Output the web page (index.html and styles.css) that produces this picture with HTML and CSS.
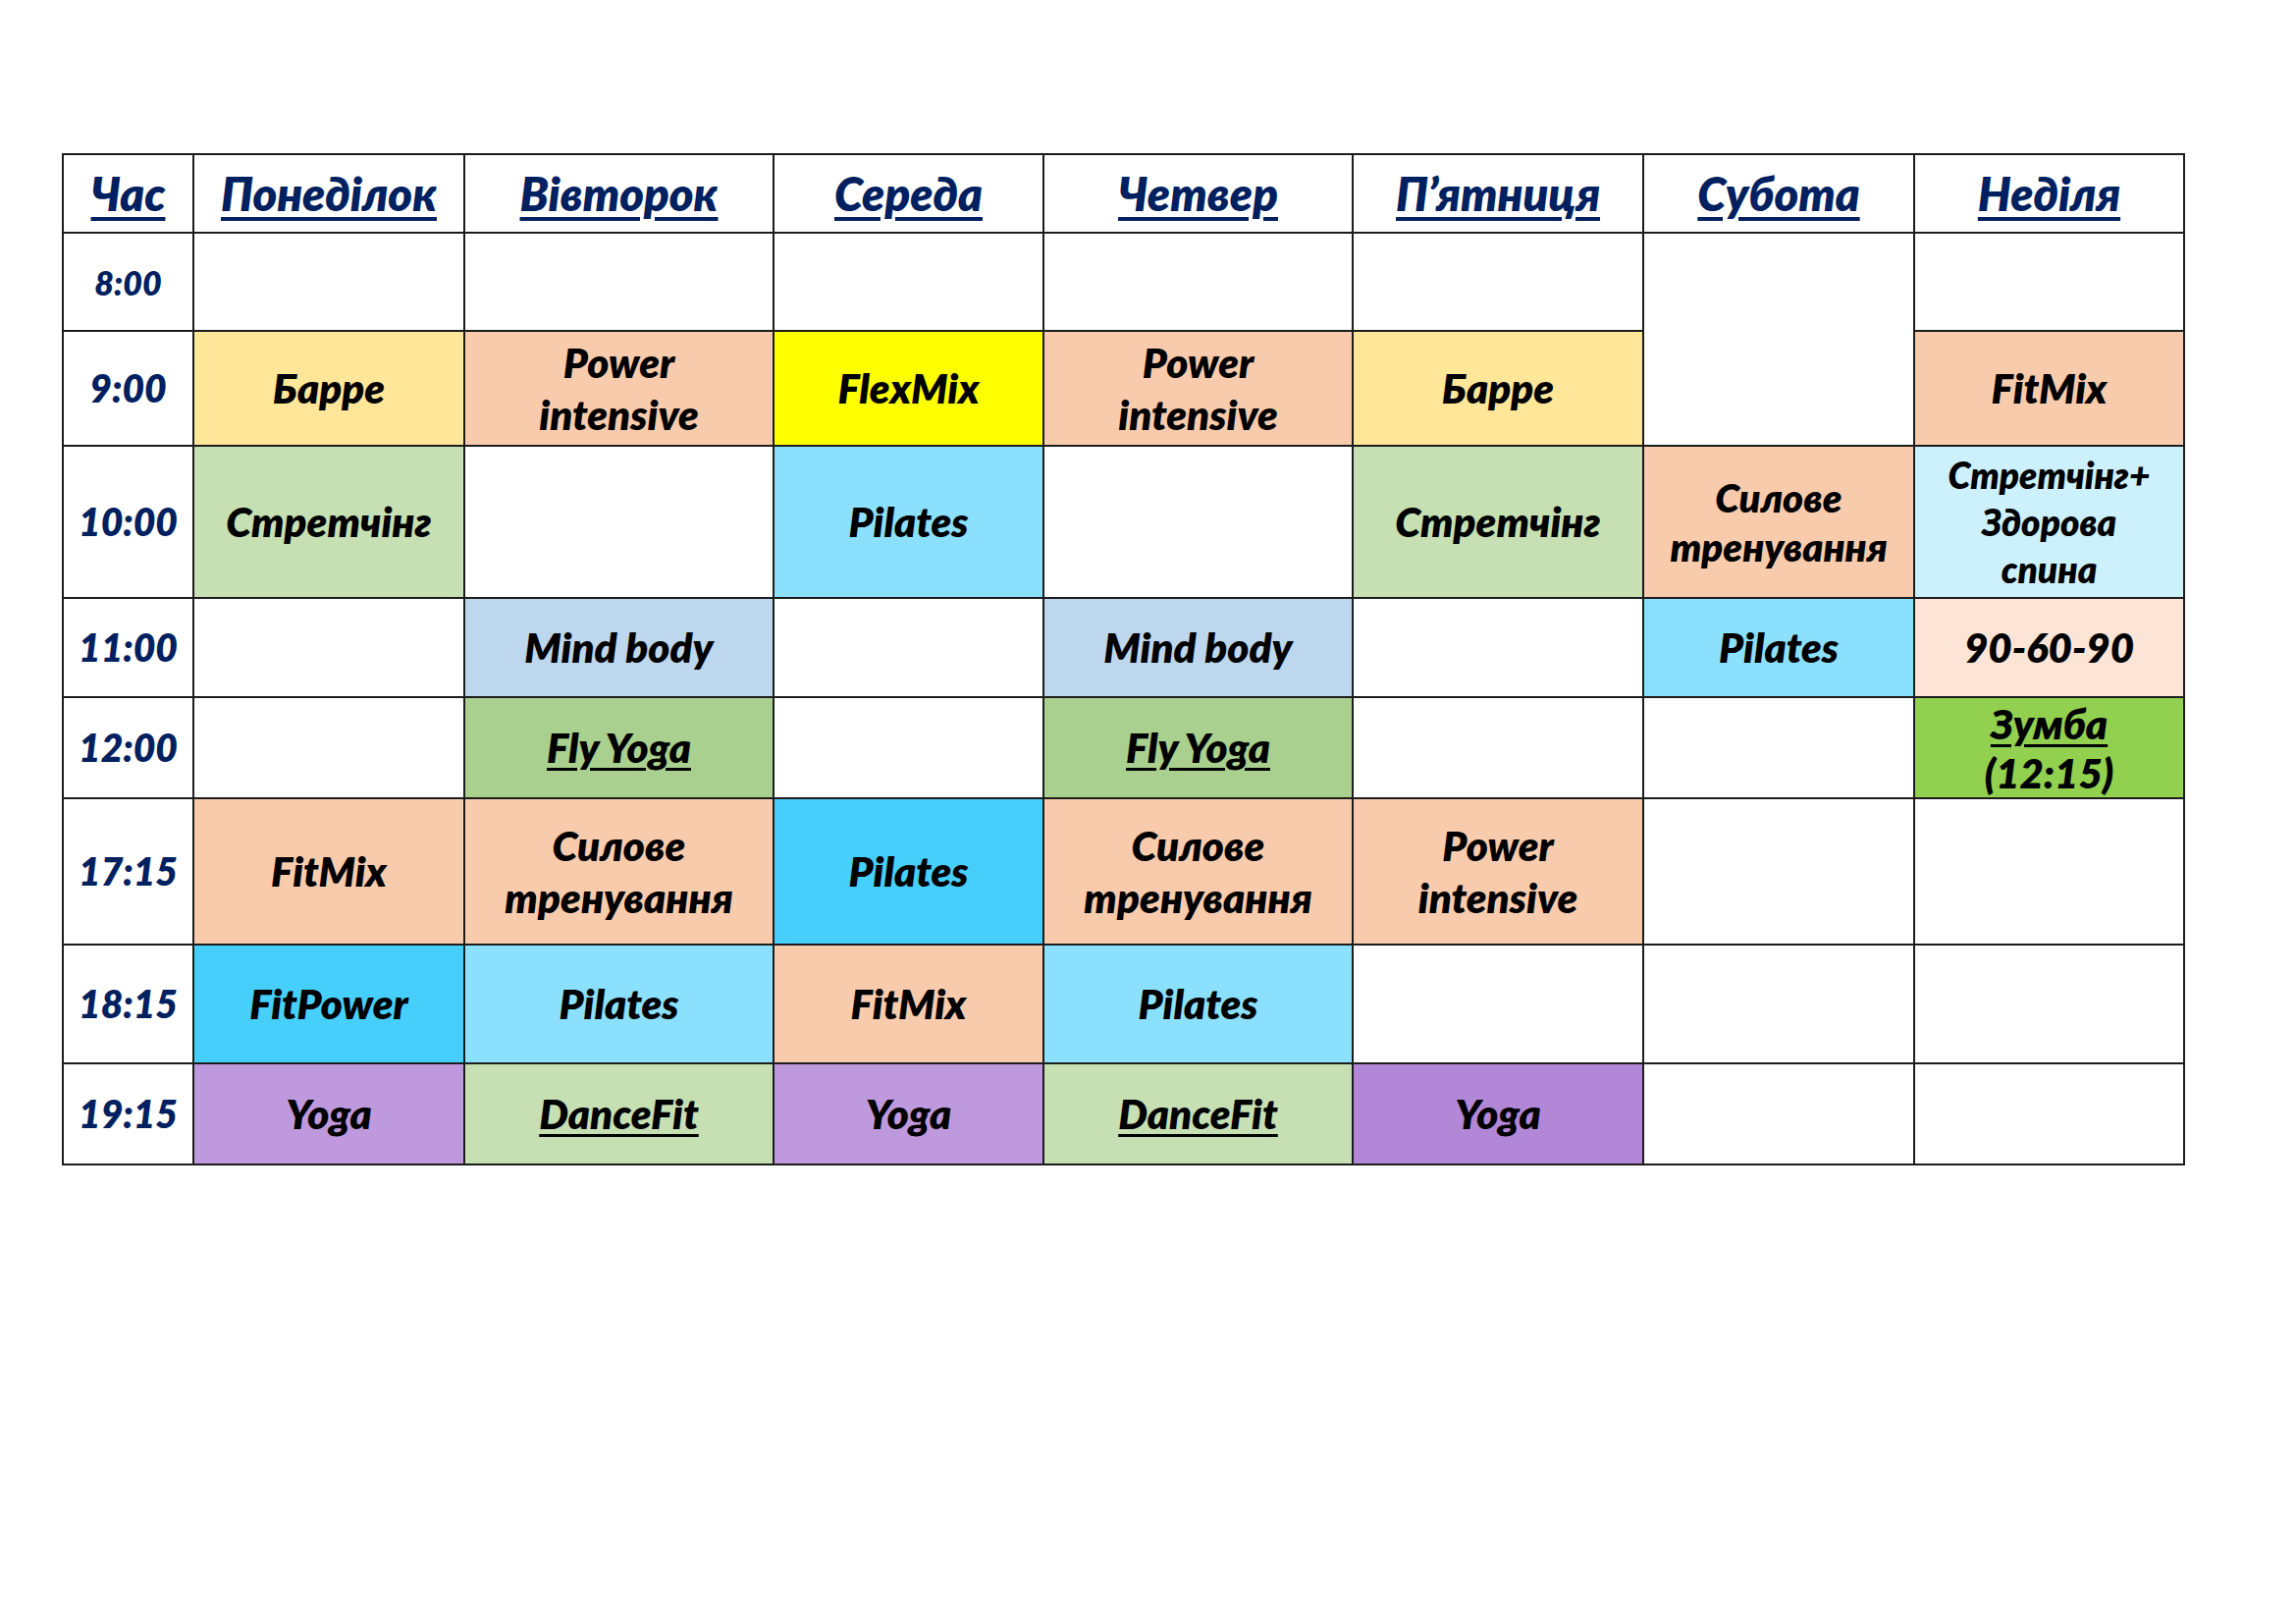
FILE: index.html
```html
<!DOCTYPE html>
<html lang="uk">
<head>
<meta charset="utf-8">
<title>Розклад</title>
<link rel="stylesheet" href="styles.css">
</head>
<body>
<div class="page">
<table class="schedule">
  <colgroup>
    <col class="w-time"><col class="w-mon"><col class="w-tue"><col class="w-wed"><col class="w-thu"><col class="w-fri"><col class="w-sat"><col class="w-sun">
  </colgroup>
  <thead>
    <tr class="r-head">
      <th><span class="u">Час</span></th>
      <th><span class="u">Понеділок</span></th>
      <th><span class="u">Вівторок</span></th>
      <th><span class="u">Середа</span></th>
      <th><span class="u">Четвер</span></th>
      <th><span class="u">П’ятниця</span></th>
      <th><span class="u">Субота</span></th>
      <th><span class="u">Неділя</span></th>
    </tr>
  </thead>
  <tbody>
    <tr class="r-800">
      <td class="time small">8:00</td>
      <td></td><td></td><td></td><td></td><td></td>
      <td rowspan="2"></td>
      <td></td>
    </tr>
    <tr class="r-900">
      <td class="time">9:00</td>
      <td class="bg-barre">Барре</td>
      <td class="bg-peach">Power<br>intensive</td>
      <td class="bg-yellow">FlexMix</td>
      <td class="bg-peach">Power<br>intensive</td>
      <td class="bg-barre">Барре</td>
      <td class="bg-peach">FitMix</td>
    </tr>
    <tr class="r-1000">
      <td class="time">10:00</td>
      <td class="bg-green">Стретчінг</td>
      <td></td>
      <td class="bg-cyan">Pilates</td>
      <td></td>
      <td class="bg-green">Стретчінг</td>
      <td class="bg-peach narrow">Силове<br>тренування</td>
      <td class="bg-ice small-text">Стретчінг+<br>Здорова<br>спина</td>
    </tr>
    <tr class="r-1100">
      <td class="time">11:00</td>
      <td></td>
      <td class="bg-blue">Mind body</td>
      <td></td>
      <td class="bg-blue">Mind body</td>
      <td></td>
      <td class="bg-cyan">Pilates</td>
      <td class="bg-cream">90-60-90</td>
    </tr>
    <tr class="r-1200">
      <td class="time">12:00</td>
      <td></td>
      <td class="bg-olive"><span class="ul">Fly Yoga</span></td>
      <td></td>
      <td class="bg-olive"><span class="ul">Fly Yoga</span></td>
      <td></td>
      <td></td>
      <td class="bg-lime tight"><span class="ul">Зумба</span><br>(12:15)</td>
    </tr>
    <tr class="r-1715">
      <td class="time">17:15</td>
      <td class="bg-peach">FitMix</td>
      <td class="bg-peach">Силове<br>тренування</td>
      <td class="bg-sky">Pilates</td>
      <td class="bg-peach">Силове<br>тренування</td>
      <td class="bg-peach">Power<br>intensive</td>
      <td></td>
      <td></td>
    </tr>
    <tr class="r-1815">
      <td class="time">18:15</td>
      <td class="bg-sky">FitPower</td>
      <td class="bg-cyan">Pilates</td>
      <td class="bg-peach">FitMix</td>
      <td class="bg-cyan">Pilates</td>
      <td></td>
      <td></td>
      <td></td>
    </tr>
    <tr class="r-1915">
      <td class="time">19:15</td>
      <td class="bg-lilac">Yoga</td>
      <td class="bg-green"><span class="ul">DanceFit</span></td>
      <td class="bg-lilac">Yoga</td>
      <td class="bg-green"><span class="ul">DanceFit</span></td>
      <td class="bg-purple">Yoga</td>
      <td></td>
      <td></td>
    </tr>
  </tbody>
</table>
</div>
</body>
</html>
```

FILE: styles.css
```css
html, body {
  margin: 0;
  padding: 0;
  background: #ffffff;
}

.page {
  padding: 156px 0 0 63px;
}

.schedule {
  border-collapse: collapse;
  table-layout: fixed;
  width: 2161px;
  font-family: Lato, "Open Sans", "Noto Sans", sans-serif;
  font-weight: 800;
  font-style: italic;
  color: #000000;
}

.w-time { width: 133px; }
.w-mon { width: 276px; }
.w-tue { width: 315px; }
.w-wed { width: 275px; }
.w-thu { width: 315px; }
.w-fri { width: 296px; }
.w-sat { width: 276px; }
.w-sun { width: 275px; }

.schedule th,
.schedule td {
  border: 2px solid #1c1c1c;
  padding: 0;
  text-align: center;
  vertical-align: middle;
  font-size: 42px;
  line-height: 53px;
  overflow: hidden;
  white-space: nowrap;
}

.schedule th {
  color: #002060;
  font-size: 47px;
  font-weight: 800;
}

.u {
  text-decoration: underline;
  text-decoration-thickness: 4px;
  text-underline-offset: 6px;
}

.ul {
  text-decoration: underline;
  text-decoration-thickness: 3px;
  text-underline-offset: 5px;
}

.schedule td.time {
  color: #002060;
  font-size: 39px;
}

.schedule td.time.small {
  font-size: 34px;
}

.schedule td.small-text {
  font-size: 37px;
  line-height: 48px;
}

.schedule td.narrow {
  font-size: 40px;
  line-height: 50px;
}

.schedule td.tight {
  line-height: 50px;
}

.r-head { height: 80px; }
.r-800 { height: 100px; }
.r-900 { height: 117px; }
.r-1000 { height: 155px; }
.r-1100 { height: 101px; }
.r-1200 { height: 103px; }
.r-1715 { height: 149px; }
.r-1815 { height: 121px; }
.r-1915 { height: 103px; }

.bg-barre { background: #ffe699; }
.bg-peach { background: #f8cbad; }
.bg-yellow { background: #ffff00; }
.bg-green { background: #c6e0b4; }
.bg-cyan { background: #8be0fd; }
.bg-sky { background: #47cffb; }
.bg-blue { background: #bdd7ee; }
.bg-olive { background: #a9d08e; }
.bg-ice { background: #ccf1fd; }
.bg-cream { background: #fce4d6; }
.bg-lime { background: #92d050; }
.bg-lilac { background: #bf99dd; }
.bg-purple { background: #b287d8; }
```
